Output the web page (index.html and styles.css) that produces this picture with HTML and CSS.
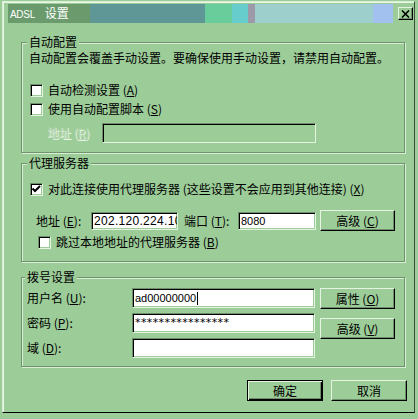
FILE: index.html
```html
<!DOCTYPE html>
<html lang="zh-CN">
<head>
<meta charset="utf-8">
<title>ADSL 设置</title>
<link rel="stylesheet" href="styles.css">
</head>
<body>
<div class="window">
  <div class="titlebar">
    <span class="title"><span class="latin">ADSL</span> 设置</span>
    <span class="close"><svg width="9" height="8" viewBox="0 0 9 8"><path d="M1 0.5 L8 7.5 M8 0.5 L1 7.5" stroke="#000" stroke-width="1.6" fill="none"/></svg></span>
  </div>
  <div class="content">
    <div class="group g1">
      <div class="legend">自动配置</div>
      <p class="desc">自动配置会覆盖手动设置。要确保使用手动设置，请禁用自动配置。</p>
      <div class="check c1"><span class="box"></span><span>自动检测设置 (<u>A</u>)</span></div>
      <div class="check c2"><span class="box"></span><span>使用自动配置脚本 (<u>S</u>)</span></div>
      <div class="row r-script">
        <span class="dis-label">地址 (<u>R</u>)</span>
        <span class="input disabled"></span>
      </div>
    </div>

    <div class="group g2">
      <div class="legend">代理服务器</div>
      <div class="check c3"><span class="box"><svg width="11" height="11" viewBox="0 0 11 11"><path d="M1.5 4.5 L4 7 L9 2" stroke="#000" stroke-width="2" fill="none"/></svg></span><span>对此连接使用代理服务器 (这些设置不会应用到其他连接) (<u>X</u>)</span></div>
      <div class="row r-proxy">
        <span class="lbl lbl-addr">地址 (<u>E</u>):</span>
        <span class="input in-ip">202.120.224.10</span>
        <span class="lbl lbl-port">端口 (<u>T</u>):</span>
        <span class="input in-port">8080</span>
        <span class="btn btn-side">高级 (<u>C</u>)</span>
      </div>
      <div class="check c4"><span class="box"></span><span>跳过本地地址的代理服务器 (<u>B</u>)</span></div>
    </div>

    <div class="group g3">
      <div class="legend">拨号设置</div>
      <div class="dial">
        <div class="dial-fields">
          <div class="row dial-row"><span class="lbl lbl-dial">用户名 (<u>U</u>):</span><span class="input in-dial">ad00000000<span class="caret"></span></span></div>
          <div class="row dial-row"><span class="lbl lbl-dial">密码 (<u>P</u>):</span><span class="input in-dial pw">****************</span></div>
          <div class="row dial-row"><span class="lbl lbl-dial">域 (<u>D</u>):</span><span class="input in-dial"></span></div>
        </div>
        <div class="dial-btns">
          <span class="btn btn-side">属性 (<u>O</u>)</span>
          <span class="btn btn-side btn-adv">高级 (<u>V</u>)</span>
        </div>
      </div>
    </div>

    <div class="footer">
      <span class="btn btn-foot default">确定</span>
      <span class="btn btn-foot">取消</span>
    </div>
  </div>
</div>
</body>
</html>
```

FILE: styles.css
```css
* { box-sizing: border-box; }
html, body { margin: 0; padding: 0; }
body {
  width: 418px;
  height: 419px;
  overflow: hidden;
  background: #9ccc98;
  font-family: "Noto Sans CJK SC", "Liberation Sans", sans-serif;
  font-size: 12px;
  line-height: 14px;
  color: #000;
}
u { text-decoration: underline; text-underline-offset: 1px; }

.window {
  margin: 1px 0 0 2px;
  width: 413px;
  height: 412px;
  border: 1px solid;
  border-color: #d8eed4 #3c4c3c #000 #d8eed4;
  box-shadow: inset 1px 1px 0 #eaf6e6;
  padding: 2px 1px 0 5px;
  background: #9ccc98;
}

.titlebar {
  height: 19px;
  display: flex;
  align-items: center;
  padding-left: 2px;
  color: #fff;
  background: linear-gradient(to right,
    #6b9b6d 0 82px, #5f9797 82px 197px, #69cd9b 197px 224px,
    #66cccc 224px 240px, #9c9aa9 240px 247px, #9dd0cd 247px 365px,
    #a2c1ee 365px 385px, #9ccc98 385px);
}
.title { font-size: 12px; line-height: 14px; }
.latin {
  font-family: "Liberation Sans", sans-serif;
  font-size: 10px;
  letter-spacing: -0.3px;
  margin-right: 7px;
}
.close {
  margin-left: auto;
  width: 15px;
  height: 13px;
  border: 1px solid;
  border-color: #e4f4e0 #000 #000 #e4f4e0;
  box-shadow: inset -1px -1px 0 #6e8e6c;
  background: #9ccc98;
  display: flex;
  align-items: center;
  justify-content: center;
}

.content { padding: 19px 6px 0 13px; }

.group {
  width: 384px;
  border: 1px solid #6f946c;
  box-shadow: 1px 1px 0 #d8eed6, inset 1px 1px 0 #d8eed6;
  padding-left: 7px;
}
.g1 { height: 111px; }
.g2 { height: 99px; margin-top: 10px; }
.g3 { height: 90px; margin-top: 15px; padding-left: 5px; }

.legend {
  width: fit-content;
  height: 14px;
  margin: -8px 0 0 -2px;
  padding: 0 2px;
  background: #9ccc98;
}
.desc { margin: 2px 0 0; height: 14px; white-space: nowrap; }

.check {
  display: flex;
  align-items: center;
  gap: 5px;
  height: 14px;
  margin-left: 1px;
  white-space: nowrap;
}
.c1 { margin-top: 18px; }
.c2 { margin-top: 5px; }
.c3 { margin-top: 12px; }
.c4 { margin-top: 4px; margin-left: 9px; }

.box {
  width: 13px;
  height: 13px;
  flex: none;
  background: #fff;
  border: 1px solid;
  border-color: #6e8e6c #e4f4e0 #e4f4e0 #6e8e6c;
  box-shadow: inset 1px 1px 0 #000, inset -1px -1px 0 #9ccc98;
  display: flex;
  align-items: center;
  justify-content: center;
}

.row { display: flex; align-items: center; }
.r-script { margin-top: 7px; height: 20px; }
.dis-label {
  width: 55px;
  margin-left: 18px;
  color: #b8d6b4;
  text-shadow: 1px 1px 0 #e6f4e2;
}

.input {
  height: 20px;
  background: #fff;
  border: 1px solid;
  border-color: #6e8e6c #e4f4e0 #e4f4e0 #6e8e6c;
  box-shadow: inset 1px 1px 0 #000, inset -1px -1px 0 #9ccc98;
  padding-left: 2px;
  display: flex;
  align-items: center;
  overflow: hidden;
  white-space: nowrap;
  font-family: "Liberation Sans", sans-serif;
  font-size: 11px;
}
.input.disabled { width: 214px; background: #9ccc98; }

.r-proxy { margin-top: 14px; height: 21px; }
.lbl { white-space: nowrap; flex: none; }
.lbl-addr { width: 55px; margin-left: 7px; }
.lbl-port { width: 54px; margin-left: 6px; }
.in-ip { width: 87px; height: 18px; font-size: 12px; letter-spacing: 0.3px; }
.in-port { width: 78px; height: 18px; }

.btn {
  height: 21px;
  flex: none;
  border: 1px solid;
  border-color: #e4f4e0 #000 #000 #e4f4e0;
  box-shadow: inset -1px -1px 0 #6e8e6c;
  background: #9ccc98;
  display: flex;
  align-items: center;
  justify-content: center;
  white-space: nowrap;
}
.btn-side { width: 75px; margin-left: 4px; }

.dial { display: flex; margin-top: 4px; }
.dial-fields { display: flex; flex-direction: column; gap: 5px; }
.dial-row { height: 20px; }
.lbl-dial { width: 105px; }
.in-dial { width: 183px; }
.pw { font-family: "DejaVu Sans", sans-serif; font-size: 11px; letter-spacing: 0.4px; }
.caret { width: 1px; height: 13px; background: #000; margin-left: 1px; }
.dial-btns { display: flex; flex-direction: column; margin-left: 1px; }
.dial-btns .btn-side { margin-left: 4px; }
.btn-adv { margin-top: 9px; }

.footer {
  display: flex;
  justify-content: flex-end;
  gap: 8px;
  margin-top: 13px;
}
.btn-foot { width: 76px; }
.btn.default {
  border-color: #000;
  box-shadow: inset 1px 1px 0 #e4f4e0, inset -1px -1px 0 #000, inset -2px -2px 0 #6e8e6c;
}
```
